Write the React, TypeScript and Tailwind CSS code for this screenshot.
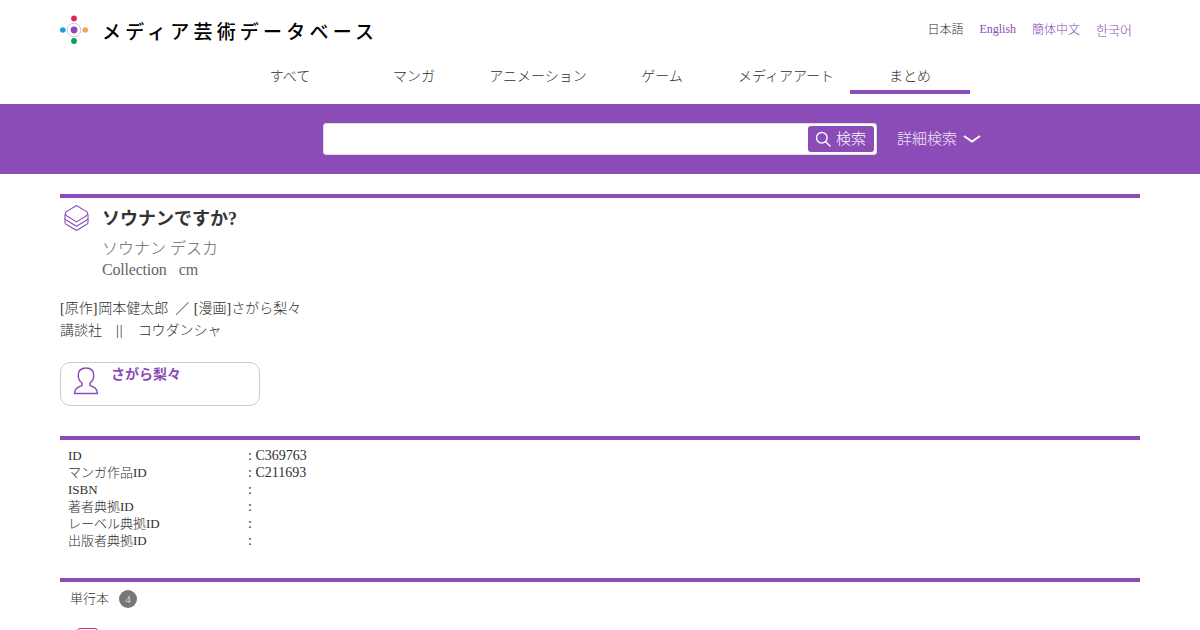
import React from "react";

function Logo() {
  return (
    <svg width="30" height="30" viewBox="0 0 30 30" className="shrink-0">
      <circle cx="14" cy="3.4" r="2.9" fill="#e0245e" />
      <circle cx="14" cy="26" r="2.9" fill="#0f9a62" />
      <circle cx="2.8" cy="15" r="2.8" fill="#1b9fd0" />
      <circle cx="25.2" cy="15" r="2.8" fill="#f2a65a" />
      <circle cx="14" cy="15" r="3.4" fill="#8c4cb8" />
      <circle cx="14" cy="15" r="6.8" fill="none" stroke="#cdbfd6" strokeWidth="0.9" />
    </svg>
  );
}

function LayersIcon() {
  return (
    <svg width="25" height="28" viewBox="0 0 26 28" fill="none" stroke="#8c4cb8" strokeWidth="1.1" strokeLinejoin="round" className="shrink-0">
      <path d="M13 1 L23.8 7.6 Q25.4 9.5 23.8 11.4 L13 18 L2.2 11.4 Q0.6 9.5 2.2 7.6 Z" />
      <path d="M1 10 V14 Q1 15 2.2 16 L13 22.5 L23.8 16 Q25 15 25 14 V10" />
      <path d="M1 14.5 V18.5 Q1 19.5 2.2 20.5 L13 27 L23.8 20.5 Q25 19.5 25 18.5 V14.5" />
    </svg>
  );
}

function PersonIcon() {
  return (
    <svg width="26" height="28" viewBox="0 0 26 28" fill="none" stroke="#8c4cb8" strokeWidth="1.5" strokeLinejoin="round" className="shrink-0">
      <path d="M13 1 C7.5 1 5.3 4.5 5.3 8.5 C5.3 12 6.8 14.5 9 16 L9 18.5 C5.5 20 1.8 21 1.5 26.5 L24.5 26.5 C24.2 21 20.5 20 17 18.5 L17 16 C19.2 14.5 20.7 12 20.7 8.5 C20.7 4.5 18.5 1 13 1 Z" />
    </svg>
  );
}

const nav = ["すべて", "マンガ", "アニメーション", "ゲーム", "メディアアート", "まとめ"];
const ids = [
  ["ID", ": C369763"],
  ["マンガ作品ID", ": C211693"],
  ["ISBN", ":"],
  ["著者典拠ID", ":"],
  ["レーベル典拠ID", ":"],
  ["出版者典拠ID", ":"],
];

export default function App() {
  return (
    <div className="h-[630px] w-[1200px] overflow-hidden bg-white font-['Liberation_Serif','Noto_Sans_CJK_JP',serif] font-light text-[#2f2f2f]">
      <header className="px-[60px]">
        <div className="flex h-[60px] items-center justify-between">
          <div className="flex items-center gap-[12px]">
            <Logo />
            <span className="font-['Noto_Sans_CJK_JP',sans-serif] text-[19px] leading-none font-medium tracking-[4.2px] whitespace-nowrap text-black">
              メディア芸術データベース
            </span>
          </div>
          <div className="flex items-center gap-4 pt-[1px] pr-2 text-xs text-[#8c4cb8]">
            <span className="text-[#2f2f2f]">日本語</span>
            <span className="-translate-y-px">English</span>
            <span>簡体中文</span>
            <span className="text-[13px]">한국어</span>
          </div>
        </div>
        <nav className="ml-[170px] flex h-[34px] items-start text-sm">
          {nav.map((n, i) => (
            <div
              key={n}
              className={`h-[34px] w-[120px] shrink-0 pt-[7px] text-center leading-[20px] whitespace-nowrap ${i < 5 ? "mr-1" : "border-b-4 border-[#8c4cb8]"}`}
            >
              {n}
            </div>
          ))}
        </nav>
      </header>

      <div className="mt-[10px] flex h-[70px] items-center bg-[#8c4cb8] pl-[323px]">
        <div className="flex h-8 w-[554px] items-center justify-end rounded-[3px] border border-[#ddd] bg-white pr-[2px]">
          <div className="flex h-[26px] w-[66px] items-center justify-center gap-[5px] rounded-[3px] bg-[#8c4cb8] pr-[1px] text-[15px] text-white">
            <svg width="16" height="16" viewBox="0 0 16 16" fill="none" stroke="white" strokeWidth="1.4">
              <circle cx="6.8" cy="6.8" r="5.3" />
              <path d="M10.7 10.7 L15 15" strokeLinecap="round" />
            </svg>
            <span>検索</span>
          </div>
        </div>
        <div className="ml-5 flex items-center gap-[6px] text-[15px] text-[#f0e6f6]">
          <span>詳細検索</span>
          <svg width="18" height="10" viewBox="0 0 18 10" fill="none" stroke="white" strokeWidth="2">
            <path d="M1 2 L9 7.5 L17 2" />
          </svg>
        </div>
      </div>

      <main className="px-[60px] pt-5">
        <section className="border-t-4 border-[#8c4cb8]">
          <div className="flex items-start gap-[13px] pt-[6px] pl-[4px]">
            <LayersIcon />
            <div>
              <h1 className="pt-[1px] text-lg leading-[28px] font-bold text-[#333]">ソウナンですか?</h1>
              <p className="mt-[5px] text-base leading-[21px] text-[#666]">ソウナン デスカ</p>
              <p className="text-base leading-[22px] text-[#666]">
                <span className="tracking-[-0.2px]">Collection</span>
                <span className="ml-[12px]">cm</span>
              </p>
            </div>
          </div>
          <div className="mt-[17px] text-sm leading-[22px]">
            <p>
              [原作]<span className="ml-[1px]">岡本健太郎</span>&nbsp;&nbsp;／&nbsp;<span className="ml-[1px]">[漫画]さがら梨々</span>
            </p>
            <p>
              講談社　<span className="inline-block w-2 tracking-[1px]">||</span>　コウダンシャ
            </p>
          </div>
          <div className="mt-[20px] flex h-[44px] w-[200px] items-start gap-[12px] rounded-[10px] border border-[#ccc] pt-[2px] pl-[12px]">
            <div className="pt-[2px]"><PersonIcon /></div>
            <span className="text-sm leading-[20px] font-bold text-[#8c4cb8]">さがら梨々</span>
          </div>
        </section>

        <section className="mt-[30px] border-t-4 border-[#8c4cb8] pt-[7px] pl-2 text-[13px] leading-[17px]">
          {ids.map(([k, v]) => (
            <div key={k} className="flex">
              <span className="w-[180px] shrink-0">{k}</span>
              <span className="text-sm leading-[17px]">{v}</span>
            </div>
          ))}
        </section>

        <section className="mt-[29px] border-t-4 border-[#8c4cb8]">
          <div className="flex items-center gap-[10px] pt-2 pl-[10px] text-[13px] leading-[18px]">
            <span>単行本</span>
            <span className="flex h-[18px] w-[18px] items-center justify-center rounded-full bg-[#777] text-[11px] text-[#ddd]">4</span>
          </div>
          <div className="mt-[20px] ml-[17px] h-4 w-[21px] rounded-[3px] border border-[#e0245e]" />
        </section>
      </main>
    </div>
  );
}
